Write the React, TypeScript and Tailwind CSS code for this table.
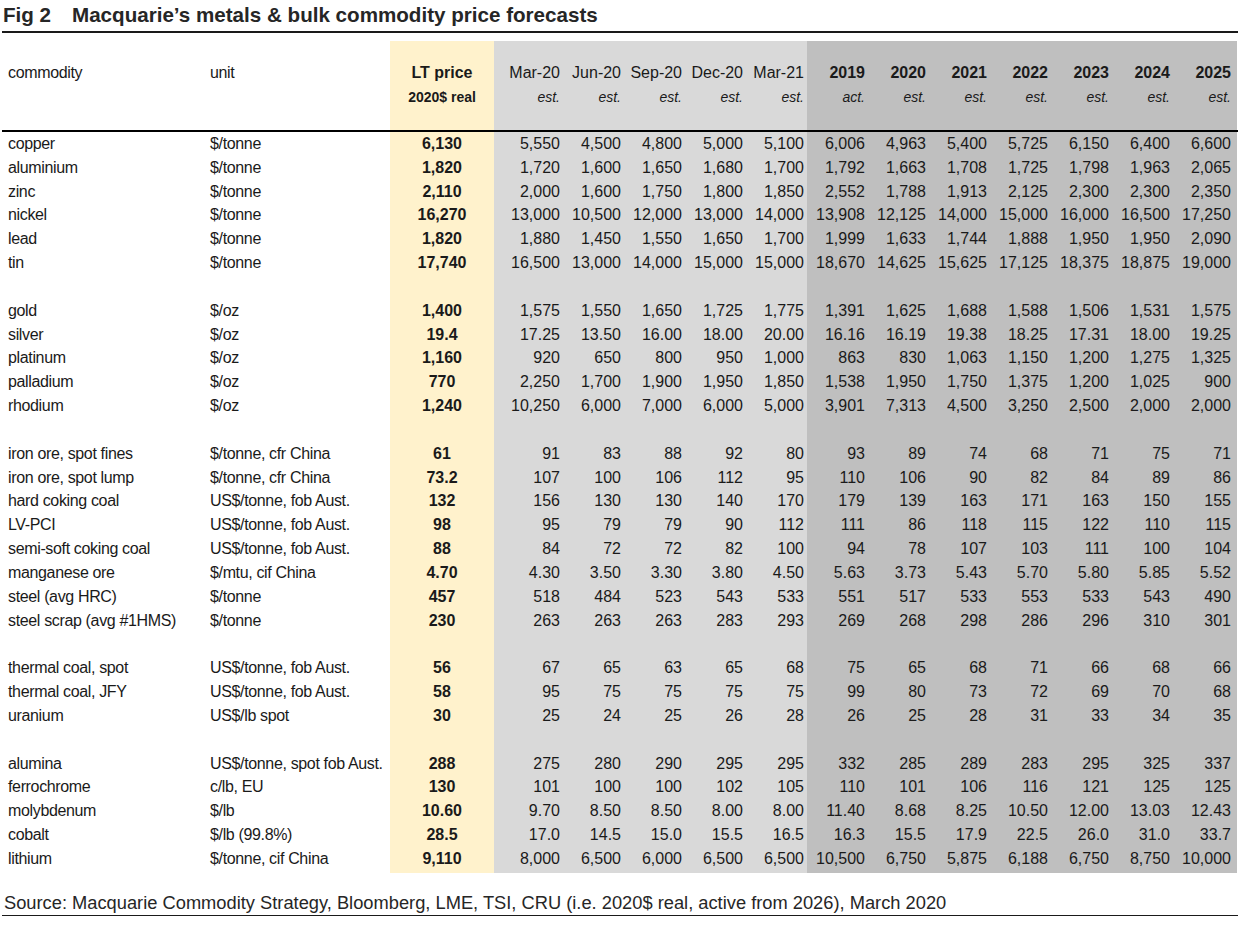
const rows: (string[] | null)[] = [
  ['copper', '$/tonne', '6,130', '5,550', '4,500', '4,800', '5,000', '5,100', '6,006', '4,963', '5,400', '5,725', '6,150', '6,400', '6,600'],
  ['aluminium', '$/tonne', '1,820', '1,720', '1,600', '1,650', '1,680', '1,700', '1,792', '1,663', '1,708', '1,725', '1,798', '1,963', '2,065'],
  ['zinc', '$/tonne', '2,110', '2,000', '1,600', '1,750', '1,800', '1,850', '2,552', '1,788', '1,913', '2,125', '2,300', '2,300', '2,350'],
  ['nickel', '$/tonne', '16,270', '13,000', '10,500', '12,000', '13,000', '14,000', '13,908', '12,125', '14,000', '15,000', '16,000', '16,500', '17,250'],
  ['lead', '$/tonne', '1,820', '1,880', '1,450', '1,550', '1,650', '1,700', '1,999', '1,633', '1,744', '1,888', '1,950', '1,950', '2,090'],
  ['tin', '$/tonne', '17,740', '16,500', '13,000', '14,000', '15,000', '15,000', '18,670', '14,625', '15,625', '17,125', '18,375', '18,875', '19,000'],
  null,
  ['gold', '$/oz', '1,400', '1,575', '1,550', '1,650', '1,725', '1,775', '1,391', '1,625', '1,688', '1,588', '1,506', '1,531', '1,575'],
  ['silver', '$/oz', '19.4', '17.25', '13.50', '16.00', '18.00', '20.00', '16.16', '16.19', '19.38', '18.25', '17.31', '18.00', '19.25'],
  ['platinum', '$/oz', '1,160', '920', '650', '800', '950', '1,000', '863', '830', '1,063', '1,150', '1,200', '1,275', '1,325'],
  ['palladium', '$/oz', '770', '2,250', '1,700', '1,900', '1,950', '1,850', '1,538', '1,950', '1,750', '1,375', '1,200', '1,025', '900'],
  ['rhodium', '$/oz', '1,240', '10,250', '6,000', '7,000', '6,000', '5,000', '3,901', '7,313', '4,500', '3,250', '2,500', '2,000', '2,000'],
  null,
  ['iron ore, spot fines', '$/tonne, cfr China', '61', '91', '83', '88', '92', '80', '93', '89', '74', '68', '71', '75', '71'],
  ['iron ore, spot lump', '$/tonne, cfr China', '73.2', '107', '100', '106', '112', '95', '110', '106', '90', '82', '84', '89', '86'],
  ['hard coking coal', 'US$/tonne, fob Aust.', '132', '156', '130', '130', '140', '170', '179', '139', '163', '171', '163', '150', '155'],
  ['LV-PCI', 'US$/tonne, fob Aust.', '98', '95', '79', '79', '90', '112', '111', '86', '118', '115', '122', '110', '115'],
  ['semi-soft coking coal', 'US$/tonne, fob Aust.', '88', '84', '72', '72', '82', '100', '94', '78', '107', '103', '111', '100', '104'],
  ['manganese ore', '$/mtu, cif China', '4.70', '4.30', '3.50', '3.30', '3.80', '4.50', '5.63', '3.73', '5.43', '5.70', '5.80', '5.85', '5.52'],
  ['steel (avg HRC)', '$/tonne', '457', '518', '484', '523', '543', '533', '551', '517', '533', '553', '533', '543', '490'],
  ['steel scrap (avg #1HMS)', '$/tonne', '230', '263', '263', '263', '283', '293', '269', '268', '298', '286', '296', '310', '301'],
  null,
  ['thermal coal, spot', 'US$/tonne, fob Aust.', '56', '67', '65', '63', '65', '68', '75', '65', '68', '71', '66', '68', '66'],
  ['thermal coal, JFY', 'US$/tonne, fob Aust.', '58', '95', '75', '75', '75', '75', '99', '80', '73', '72', '69', '70', '68'],
  ['uranium', 'US$/lb spot', '30', '25', '24', '25', '26', '28', '26', '25', '28', '31', '33', '34', '35'],
  null,
  ['alumina', 'US$/tonne, spot fob Aust.', '288', '275', '280', '290', '295', '295', '332', '285', '289', '283', '295', '325', '337'],
  ['ferrochrome', 'c/lb, EU', '130', '101', '100', '100', '102', '105', '110', '101', '106', '116', '121', '125', '125'],
  ['molybdenum', '$/lb', '10.60', '9.70', '8.50', '8.50', '8.00', '8.00', '11.40', '8.68', '8.25', '10.50', '12.00', '13.03', '12.43'],
  ['cobalt', '$/lb (99.8%)', '28.5', '17.0', '14.5', '15.0', '15.5', '16.5', '16.3', '15.5', '17.9', '22.5', '26.0', '31.0', '33.7'],
  ['lithium', '$/tonne, cif China', '9,110', '8,000', '6,500', '6,000', '6,500', '6,500', '10,500', '6,750', '5,875', '6,188', '6,750', '8,750', '10,000'],
]

const quarters = ['Mar-20', 'Jun-20', 'Sep-20', 'Dec-20', 'Mar-21']
const years = ['2019', '2020', '2021', '2022', '2023', '2024', '2025']

function Row({ r }: { r: string[] | null }) {
  return (
    <div className="flex h-[23.83px] items-center leading-[23.83px]">
      <div className="flex w-[390px] tracking-[-0.35px]">
        <span className="w-[210px] shrink-0 whitespace-nowrap pl-[8px]">{r?.[0]}</span>
        <span className="whitespace-nowrap">{r?.[1]}</span>
      </div>
      <div className="h-full w-[104px] bg-[#fff2cc] text-center font-bold">{r?.[2]}</div>
      <div className="flex h-full w-[313px] bg-[#d9d9d9] pl-[8px]">
        {r?.slice(3, 8).map((v, i) => (
          <span key={i} className="w-[61px] shrink-0 pr-[3px] text-right">{v}</span>
        ))}
      </div>
      <div className="flex h-full w-[430px] bg-[#bfbfbf] pr-[3px]">
        {r?.slice(8).map((v, i) => (
          <span key={i} className="w-[61px] shrink-0 pr-[3px] text-right">{v}</span>
        ))}
      </div>
    </div>
  )
}

export default function App() {
  return (
    <div className="h-[928px] w-[1243px] bg-white font-['Liberation_Sans',Arial,sans-serif] text-[#1a1a1a]">
      <div className="flex h-[31px] items-center pl-[3px] text-[20.6px] font-bold text-[#262626]">
        <span className="w-[69px]">Fig 2</span>
        <span>Macquarie’s metals &amp; bulk commodity price forecasts</span>
      </div>
      <div className="ml-[2px] h-[2px] w-[1236px] bg-[#1a1a1a]" />
      <div className="mt-[8px] text-[16px]">
        <div className="flex h-[89px] leading-[24px]">
          <div className="flex w-[390px] pt-[20px] tracking-[-0.35px]">
            <span className="w-[210px] shrink-0 pl-[8px]">commodity</span>
            <span>unit</span>
          </div>
          <div className="w-[104px] bg-[#fff2cc] pt-[20px] text-center font-bold">
            <div>LT price</div>
            <div className="text-[14px]">2020$ real</div>
          </div>
          <div className="flex w-[313px] bg-[#d9d9d9] pl-[8px] pt-[20px]">
            {quarters.map((q) => (
              <div key={q} className="w-[61px] shrink-0 whitespace-nowrap pr-[3px] text-right">
                <div>{q}</div>
                <div className="text-[14px] italic">est.</div>
              </div>
            ))}
          </div>
          <div className="flex w-[430px] bg-[#bfbfbf] pr-[3px] pt-[20px]">
            {years.map((y) => (
              <div key={y} className="w-[61px] shrink-0 pr-[3px] text-right">
                <div className="font-bold">{y}</div>
                <div className="text-[14px] italic">{y === '2019' ? 'act.' : 'est.'}</div>
              </div>
            ))}
          </div>
        </div>
        <div className="ml-[2px] h-[2px] w-[1236px] bg-black" />
        {rows.map((r, i) => (
          <Row key={i} r={r} />
        ))}
        <div className="flex h-[2px]">
          <div className="w-[390px]" />
          <div className="w-[104px] bg-[#fff2cc]" />
          <div className="w-[313px] bg-[#d9d9d9]" />
          <div className="w-[430px] bg-[#bfbfbf]" />
        </div>
      </div>
      <div className="mt-[20px] whitespace-nowrap pl-[4px] text-[18.3px] leading-[20px] text-[#262626]">
        Source: Macquarie Commodity Strategy, Bloomberg, LME, TSI, CRU (i.e. 2020$ real, active from 2026), March 2020
      </div>
      <div className="ml-[2px] mt-[2px] h-[1px] w-[1236px] bg-[#1a1a1a]" />
    </div>
  )
}
